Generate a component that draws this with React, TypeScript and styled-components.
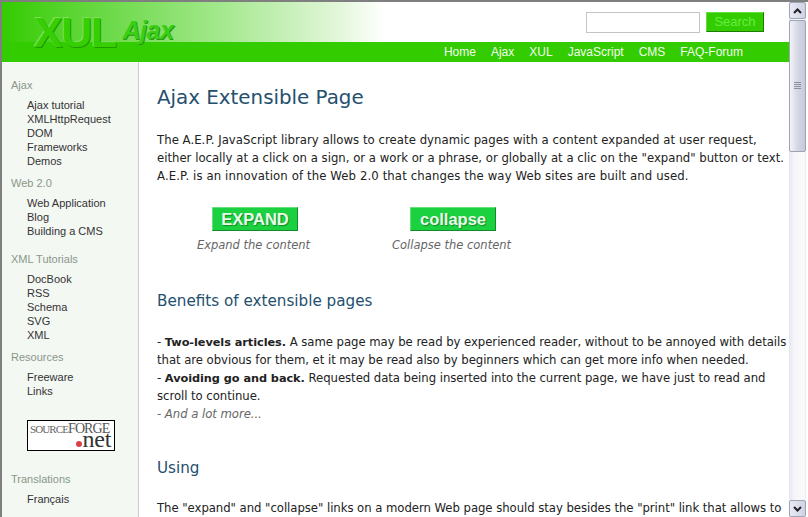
import React from "react";
import styled, { createGlobalStyle } from "styled-components";

const Global = createGlobalStyle`
  html, body { margin: 0; padding: 0; background: #fff; overflow: hidden; }
  * { box-sizing: border-box; }
`;

const Frame = styled.div`
  width: 808px; height: 517px; display: flex; overflow: hidden;
  border-top: 2px solid #7f7f7f; border-left: 2px solid #7f7f7f;
  background: #fff;
`;
const Page = styled.div`
  width: 787px; height: 515px; display: flex; flex-direction: column; overflow: hidden; flex: none;
`;
const Header = styled.header`
  height: 40px; flex: none; display: flex; justify-content: space-between; align-items: flex-start;
  position: relative; z-index: 1;
  background: linear-gradient(90deg, #33cc00 0px, #55d42b 60px, #a4e88e 220px, #e4f7dc 340px, #ffffff 382px);
`;
const Logo = styled.div`
  display: flex; align-items: flex-start; padding-left: 32px; height: 40px;
  font-family: "Liberation Sans", Arial, sans-serif; color: #33cc00;
`;
const LogoMain = styled.span`
  font-size: 43px; line-height: 50px; letter-spacing: -1.5px; font-weight: bold; margin-top: 5px; color: #35cf04;
  text-shadow: 1px 1px 0 #1f9a00, -1px -1px 0 #7fe060;
`;
const LogoSub = styled.span`
  font-size: 25px; line-height: 30px; font-style: italic; font-weight: bold; margin: 13px 0 0 7px; letter-spacing: -0.5px; color: #38cf14;
  text-shadow: 1px 1px 0 #259912;
`;
const SearchForm = styled.form`
  display: flex; gap: 6px; margin: 10px 25px 0 0;
`;
const SearchInput = styled.input`
  width: 114px; height: 21px; border: 1px solid #c4c4c4; background: #fff; padding: 0; outline: none;
`;
const SearchButton = styled.button`
  width: 58px; height: 20px; padding: 0 0 2px; background: #33cc00; color: #66ee44;
  font: 13px "Liberation Sans", Arial, sans-serif;
  border: 1px solid; border-color: #66dd44 #1f7a00 #1f7a00 #66dd44;
`;
const NavBar = styled.nav`
  height: 20px; flex: none; background: #33cc00; display: flex; justify-content: flex-end; gap: 15px;
  padding-right: 46px; font: 12px/20px "Liberation Sans", Arial, sans-serif; color: #f2fcee;
`;
const NavItem = styled.span``;
const Body = styled.div`
  flex: 1; display: flex; min-height: 0;
`;
const Sidebar = styled.aside`
  width: 137px; flex: none; background: #f3f8f3; border-right: 1px solid #c8cfc8; padding: 16px 0 0 9px;
  font: 11px/14px "Liberation Sans", Arial, sans-serif; color: #333; overflow: hidden;
`;
const SideTitle = styled.div`
  color: #8a968a; height: 14px; margin-bottom: 6px;
`;
const SideList = styled.div<{ $after: number }>`
  padding-left: 16px; margin-bottom: ${(p) => p.$after}px; display: flex; flex-direction: column;
`;
const SourceForge = styled.div`
  margin: 22px 0 21px 16px; width: 88px; height: 31px; border: 1px solid #000; background: #fff;
  padding: 1px 2px 0; font-family: "Liberation Serif", serif; color: #666; display: flex; flex-direction: column;
`;
const SfTop = styled.div`
  height: 14px; font-size: 11px; line-height: 14px; white-space: nowrap; letter-spacing: -0.9px;
`;
const SfForge = styled.span`
  font-size: 14px; letter-spacing: -0.9px; color: #555;
`;
const SfNet = styled.div`
  height: 15px; font-size: 24px; line-height: 6px; color: #333; text-align: right; letter-spacing: -0.3px; padding-right: 1px;
`;
const SfDot = styled.i`
  display: inline-block; width: 6px; height: 6px; border-radius: 50%; background: #d8404a; margin-right: 1px;
`;
const Main = styled.main`
  flex: 1; padding: 20px 0 0 18px; min-width: 0; overflow: hidden;
  font: 11.7px/18px "DejaVu Sans", sans-serif; color: #222;
`;
const H1 = styled.h1`
  margin: 0 0 17px; font: 400 19.85px/32px "DejaVu Sans", sans-serif; color: #24506e;
`;
const Para = styled.p<{ $track: number }>`
  margin: 0; white-space: nowrap; letter-spacing: ${(p) => p.$track}px;
`;
const Buttons = styled.div`
  display: flex; margin: 22px 0 0 0; padding-left: 38px; gap: 78px;
`;
const ButtonCol = styled.div`
  width: 120px; display: flex; flex-direction: column; align-items: center; font-style: italic; font-size: 11.5px; color: #666; white-space: nowrap;
`;
const BigButton = styled.div`
  width: 86px; height: 24px; margin-bottom: 5px; background: #1cd13f; color: #e8fbe8;
  border: 1px solid; border-color: #66e07a #128a2a #128a2a #66e07a;
  font: bold 16.5px/22px "Liberation Sans", Arial, sans-serif; text-align: center;
  text-shadow: 1px 1px 1px #128a2a;
`;
const Caption = styled.span`
  margin-right: 3px;
`;
const H2 = styled.h2<{ $top: number }>`
  font: 400 15.2px/24px "DejaVu Sans", sans-serif; color: #24506e; margin: ${(p) => p.$top}px 0 0;
`;
const Article = styled.div<{ $top: number }>`
  margin-top: ${(p) => p.$top}px; white-space: nowrap; letter-spacing: -0.05px;
`;
const Strong = styled.strong`
  font-size: 11.3px; line-height: 0;
`;
const Muted = styled.em`
  color: #666;
`;
const Scrollbar = styled.div`
  width: 17px; flex: none; margin-right: 2px; display: flex; flex-direction: column; height: 515px;
  background: linear-gradient(90deg, #e6e6f0, #f6f6fa 35%, #fafafc 90%, #e8e8ee);
`;
const ScrollBtn = styled.div`
  width: 17px; height: 17px; flex: none; display: flex; align-items: center; justify-content: center;
  border: 1px solid #9ea4b4; border-radius: 2px; background: linear-gradient(90deg, #e8ebf4, #cfd3e2);
`;
const Thumb = styled.div`
  height: 132px; flex: none; margin-top: 1px; display: flex; align-items: center; justify-content: center;
  border: 1px solid #9ea4b4; border-radius: 2px; background: linear-gradient(90deg, #f2f3f9, #d3d5e4 55%, #c8cad9);
`;
const Grip = styled.div`
  width: 7px; height: 8px;
  background: repeating-linear-gradient(180deg, #8c8f9d 0 1px, transparent 1px 2px);
`;
const Track = styled.div`
  flex: 1;
`;

const Chevron = ({ up }: { up?: boolean }) => (
  <svg width="9" height="6" viewBox="0 0 9 6">
    <path d={up ? "M1 5 L4.5 1.5 L8 5" : "M1 1 L4.5 4.5 L8 1"} fill="none" stroke="#222" strokeWidth="2" />
  </svg>
);

const sections: [string, string[], number][] = [
  ["Ajax", ["Ajax tutorial", "XMLHttpRequest", "DOM", "Frameworks", "Demos"], 8],
  ["Web 2.0", ["Web Application", "Blog", "Building a CMS"], 14],
  ["XML Tutorials", ["DocBook", "RSS", "Schema", "SVG", "XML"], 8],
  ["Resources", ["Freeware", "Links"], 8],
];

export default function App() {
  return (
    <Frame>
      <Global />
      <Page>
        <Header>
          <Logo>
            <LogoMain>XUL</LogoMain>
            <LogoSub>Ajax</LogoSub>
          </Logo>
          <SearchForm>
            <SearchInput />
            <SearchButton type="button">Search</SearchButton>
          </SearchForm>
        </Header>
        <NavBar>
          {["Home", "Ajax", "XUL", "JavaScript", "CMS", "FAQ-Forum"].map((n) => (
            <NavItem key={n}>{n}</NavItem>
          ))}
        </NavBar>
        <Body>
          <Sidebar>
            {sections.map(([title, items, after]) => (
              <React.Fragment key={title}>
                <SideTitle>{title}</SideTitle>
                <SideList $after={after}>
                  {items.map((i) => (
                    <span key={i}>{i}</span>
                  ))}
                </SideList>
              </React.Fragment>
            ))}
            <SourceForge>
              <SfTop>
                SOURCE<SfForge>FORGE</SfForge>
              </SfTop>
              <SfNet>
                <SfDot />
                net
              </SfNet>
            </SourceForge>
            <SideTitle>Translations</SideTitle>
            <SideList $after={0}>
              <span>Français</span>
            </SideList>
          </Sidebar>
          <Main>
            <H1>Ajax Extensible Page</H1>
            <Para $track={0.04}>The A.E.P. JavaScript library allows to create dynamic pages with a content expanded at user request,</Para>
            <Para $track={0}>either locally at a click on a sign, or a work or a phrase, or globally at a clic on the "expand" button or text.</Para>
            <Para $track={0.11}>A.E.P. is an innovation of the Web 2.0 that changes the way Web sites are built and used.</Para>
            <Buttons>
              <ButtonCol>
                <BigButton>EXPAND</BigButton>
                <Caption>Expand the content</Caption>
              </ButtonCol>
              <ButtonCol>
                <BigButton>collapse</BigButton>
                <Caption>Collapse the content</Caption>
              </ButtonCol>
            </Buttons>
            <H2 $top={35}>Benefits of extensible pages</H2>
            <Article $top={20}>
              - <Strong>Two-levels articles.</Strong> A same page may be read by experienced reader, without to be annoyed with details
              <br />
              that are obvious for them, et it may be read also by beginners which can get more info when needed.
              <br />
              - <Strong>Avoiding go and back.</Strong> Requested data being inserted into the current page, we have just to read and
              <br />
              scroll to continue.
              <br />
              <Muted>- And a lot more...</Muted>
            </Article>
            <H2 $top={33}>Using</H2>
            <Article $top={19}>
              The "expand" and "collapse" links on a modern Web page should stay besides the "print" link that allows to
            </Article>
          </Main>
        </Body>
      </Page>
      <Scrollbar>
        <ScrollBtn>
          <Chevron up />
        </ScrollBtn>
        <Thumb>
          <Grip />
        </Thumb>
        <Track />
        <ScrollBtn>
          <Chevron />
        </ScrollBtn>
      </Scrollbar>
    </Frame>
  );
}
